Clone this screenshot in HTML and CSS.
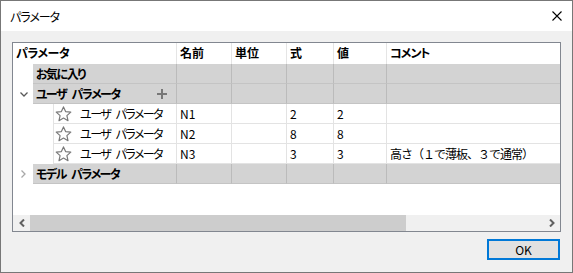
FILE: index.html
```html
<!DOCTYPE html>
<html lang="ja">
<head>
    <meta charset="UTF-8">
    <title>パラメータ</title>
    <link rel="stylesheet" href="styles.css">
</head>
<body>
<div class="window">
    <div class="titlebar">
        <span class="title">パラメータ</span>
        <svg class="close" width="10" height="10" viewBox="0 0 10 10"><path d="M0.5 0.5 L9.5 9.5 M9.5 0.5 L0.5 9.5" stroke="#000" stroke-width="1.1" fill="none"/></svg>
    </div>
    <div class="content">
        <div class="grid">
            <div class="rows">
                <div class="row header">
                    <div class="cell c-first">パラメータ</div>
                    <div class="cell c-name">名前</div>
                    <div class="cell c-unit">単位</div>
                    <div class="cell c-expr">式</div>
                    <div class="cell c-val">値</div>
                    <div class="cell c-comment">コメント</div>
                </div>
                <div class="row group">
                    <div class="toggle"></div>
                    <div class="cell c-group">お気に入り</div>
                    <div class="cell c-name"></div>
                    <div class="cell c-unit"></div>
                    <div class="cell c-expr"></div>
                    <div class="cell c-val"></div>
                    <div class="cell c-comment"></div>
                </div>
                <div class="row group">
                    <div class="toggle">
                        <svg width="8" height="5" viewBox="0 0 8 5"><path d="M0.5 0.5 L4 4 L7.5 0.5" stroke="#5a5a5a" stroke-width="1.3" fill="none"/></svg>
                    </div>
                    <div class="cell c-group">ユーザ パラメータ
                        <svg class="plus" width="10" height="10" viewBox="0 0 10 10"><path d="M5 0 V10 M0 5 H10" stroke="#777" stroke-width="2"/></svg>
                    </div>
                    <div class="cell c-name"></div>
                    <div class="cell c-unit"></div>
                    <div class="cell c-expr"></div>
                    <div class="cell c-val"></div>
                    <div class="cell c-comment"></div>
                </div>
                <div class="row item">
                    <div class="indent"></div>
                    <div class="cell c-item"><svg class="star" width="17" height="16" viewBox="0 0 17 16"><path d="M8.5 0.9 L10.6 5.6 L15.8 6.1 L11.9 9.6 L13 14.7 L8.5 12.1 L4 14.7 L5.1 9.6 L1.2 6.1 L6.4 5.6 Z" stroke="#7a7a7a" stroke-width="1.2" fill="none" stroke-linejoin="round"/></svg>ユーザ パラメータ</div>
                    <div class="cell c-name">N1</div>
                    <div class="cell c-unit"></div>
                    <div class="cell c-expr">2</div>
                    <div class="cell c-val">2</div>
                    <div class="cell c-comment"></div>
                </div>
                <div class="row item">
                    <div class="indent"></div>
                    <div class="cell c-item"><svg class="star" width="17" height="16" viewBox="0 0 17 16"><path d="M8.5 0.9 L10.6 5.6 L15.8 6.1 L11.9 9.6 L13 14.7 L8.5 12.1 L4 14.7 L5.1 9.6 L1.2 6.1 L6.4 5.6 Z" stroke="#7a7a7a" stroke-width="1.2" fill="none" stroke-linejoin="round"/></svg>ユーザ パラメータ</div>
                    <div class="cell c-name">N2</div>
                    <div class="cell c-unit"></div>
                    <div class="cell c-expr">8</div>
                    <div class="cell c-val">8</div>
                    <div class="cell c-comment"></div>
                </div>
                <div class="row item">
                    <div class="indent"></div>
                    <div class="cell c-item"><svg class="star" width="17" height="16" viewBox="0 0 17 16"><path d="M8.5 0.9 L10.6 5.6 L15.8 6.1 L11.9 9.6 L13 14.7 L8.5 12.1 L4 14.7 L5.1 9.6 L1.2 6.1 L6.4 5.6 Z" stroke="#7a7a7a" stroke-width="1.2" fill="none" stroke-linejoin="round"/></svg>ユーザ パラメータ</div>
                    <div class="cell c-name">N3</div>
                    <div class="cell c-unit"></div>
                    <div class="cell c-expr">3</div>
                    <div class="cell c-val">3</div>
                    <div class="cell c-comment c-note">高さ（１で薄板、３で通常）</div>
                </div>
                <div class="row group">
                    <div class="toggle">
                        <svg width="5" height="8" viewBox="0 0 5 8"><path d="M0.5 0.5 L4 4 L0.5 7.5" stroke="#a8a8a8" stroke-width="1.3" fill="none"/></svg>
                    </div>
                    <div class="cell c-group">モデル パラメータ</div>
                    <div class="cell c-name"></div>
                    <div class="cell c-unit"></div>
                    <div class="cell c-expr"></div>
                    <div class="cell c-val"></div>
                    <div class="cell c-comment"></div>
                </div>
            </div>
            <div class="hscroll">
                <div class="arrow">
                    <svg width="6" height="8" viewBox="0 0 6 8"><path d="M5 0.5 L1.5 4 L5 7.5" stroke="#606060" stroke-width="2" fill="none"/></svg>
                </div>
                <div class="thumb"></div>
                <div class="track"></div>
                <div class="arrow">
                    <svg width="6" height="8" viewBox="0 0 6 8"><path d="M1 0.5 L4.5 4 L1 7.5" stroke="#606060" stroke-width="2" fill="none"/></svg>
                </div>
            </div>
        </div>
        <div class="footer">
            <button class="ok">OK</button>
        </div>
    </div>
</div>
</body>
</html>
```

FILE: styles.css
```css
body{
    margin: 0;
    font-family: "Noto Sans CJK JP", "Noto Sans", sans-serif;
    font-size: 12px;
    font-feature-settings: "palt";
    color: #000;
}
.window{
    width: 573px;
    height: 273px;
    box-sizing: border-box;
    border: 1px solid #777777;
    background: #f0f0f0;
    display: flex;
    flex-direction: column;
}
.titlebar{
    height: 30px;
    background: #fff;
    display: flex;
    align-items: center;
    justify-content: space-between;
    padding: 0 10px 0 9px;
}
.title{
    font-size: 12px;
    letter-spacing: -1px;
}
.content{
    flex: 1;
    padding: 11px 11px 0 11px;
    display: flex;
    flex-direction: column;
}
.grid{
    width: 549px;
    height: 190px;
    box-sizing: border-box;
    border: 1px solid #828790;
    background: #fff;
    display: flex;
    flex-direction: column;
}
.rows{
    flex: 1;
}
.row{
    display: flex;
    height: 20px;
    line-height: 19px;
}
.cell{
    box-sizing: border-box;
    height: 100%;
    padding-left: 3px;
    white-space: nowrap;
    overflow: hidden;
}
.c-first{ width: 164px; letter-spacing: -0.5px; }
.c-group{ width: 144px; position: relative; letter-spacing: -1.5px; word-spacing: 4px; }
.c-item{ width: 124px; display: flex; align-items: center; padding-left: 1px; border-left: 1px solid #e3e3e3; letter-spacing: -1.5px; word-spacing: 4px; }
.c-name{ width: 55px; }
.c-unit{ width: 55px; }
.c-expr{ width: 47px; }
.c-val{ width: 53px; }
.c-comment{ flex: 1; }
.c-note{
    font-feature-settings: normal;
    letter-spacing: -1px;
}

.header{
    height: 21px;
    line-height: 20px;
    font-weight: bold;
}
.header .cell{
    border-right: 1px solid #e5e5e5;
}
.header .c-comment{ border-right: none; letter-spacing: -1px; }

.toggle{
    width: 20px;
    display: flex;
    align-items: center;
    justify-content: center;
    padding-left: 1px;
    box-sizing: border-box;
}
.group .cell{
    background: #d3d3d3;
    border-right: 1px solid #bbbbbb;
    border-bottom: 1px solid #c4c4c4;
    font-weight: bold;
}
.group .c-comment{ border-right: none; }
.plus{
    position: absolute;
    right: 9px;
    top: 5px;
}

.indent{
    width: 40px;
}
.item .cell{
    border-right: 1px solid #e3e3e3;
    border-bottom: 1px solid #e3e3e3;
}
.item .c-comment{ border-right: none; }
.star{
    margin-right: 8px;
    flex-shrink: 0;
}

.hscroll{
    height: 16px;
    display: flex;
    background: #f0f0f0;
}
.arrow{
    width: 17px;
    display: flex;
    align-items: center;
    justify-content: center;
}
.thumb{
    width: 376px;
    background: #cdcdcd;
}
.track{
    flex: 1;
}

.footer{
    display: flex;
    justify-content: flex-end;
    padding-top: 7px;
}
.ok{
    width: 73px;
    height: 21px;
    margin-right: 1px;
    box-sizing: border-box;
    border: 2px solid #0078d7;
    background: #e1e1e1;
    font-family: "Noto Sans CJK JP", "Noto Sans", sans-serif;
    font-size: 12px;
    line-height: 15px;
    padding: 0;
    color: #000;
}
```
